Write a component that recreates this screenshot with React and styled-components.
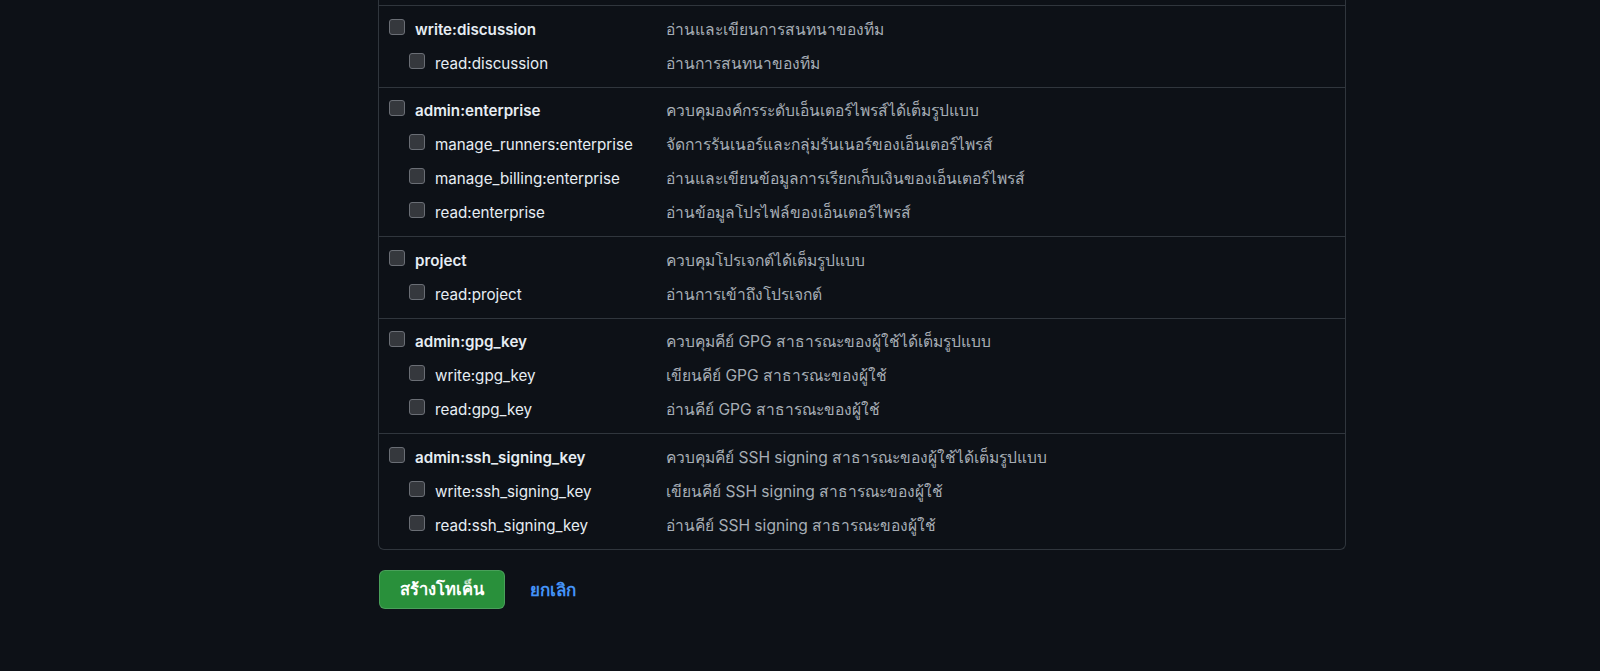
import React from "react";
import styled, { createGlobalStyle } from "styled-components";

const Global = createGlobalStyle`
  html, body { margin: 0; padding: 0; background: #0d1117; }
  body {
    font-family: Inter, "Liberation Sans", "Noto Sans", sans-serif;
    color: #e6edf3;
    -webkit-font-smoothing: antialiased;
  }
`;

const Page = styled.div`
  width: 1600px;
  height: 671px;
  overflow: hidden;
  background: #0d1117;
  padding-left: 378px;
  box-sizing: border-box;
`;

const Column = styled.div`
  width: 968px;
`;

const ScopeBox = styled.div`
  border: 1px solid #30363d;
  border-top: none;
  border-radius: 0 0 6px 6px;
  padding-top: 5px;
`;

const Group = styled.div`
  border-top: 1px solid #30363d;
  padding: 6px 10px 6.6px;
`;

const Row = styled.div`
  display: grid;
  grid-template-columns: 277px 1fr;
  align-items: center;
  height: 34px;
`;

const LabelCell = styled.label`
  display: flex;
  align-items: center;
  gap: 10px;
  padding-left: ${(p) => (p.$nested ? "20px" : "0")};
  font-size: 15.2px;
  font-weight: ${(p) => (p.$nested ? 400 : 600)};
  color: #e6edf3;
  white-space: nowrap;
`;

const Box = styled.span`
  display: inline-block;
  flex: none;
  width: 14px;
  height: 14px;
  border: 1px solid #6a6e75;
  background: #35383d;
  border-radius: 3px;
  margin-top: -5px;
`;

const Desc = styled.div`
  font-size: 15.6px;
  color: #a6adb5;
  white-space: nowrap;
`;

const Actions = styled.div`
  display: flex;
  align-items: center;
  gap: 25px;
  margin-top: 20px;
  margin-left: 1px;
`;

const PrimaryButton = styled.button`
  height: 39px;
  padding: 0 20px;
  background: #29903b;
  color: #ffffff;
  border: 1px solid rgba(240, 246, 252, 0.16);
  border-radius: 6px;
  font-family: inherit;
  font-size: 16.5px;
  font-weight: 700;
  cursor: pointer;
`;

const CancelLink = styled.a`
  color: #4493f8;
  font-size: 17px;
  font-weight: 600;
  text-decoration: none;
`;

const groups = [
  [
    ["write:discussion", "อ่านและเขียนการสนทนาของทีม"],
    ["read:discussion", "อ่านการสนทนาของทีม"],
  ],
  [
    ["admin:enterprise", "ควบคุมองค์กรระดับเอ็นเตอร์ไพรส์ได้เต็มรูปแบบ"],
    ["manage_runners:enterprise", "จัดการรันเนอร์และกลุ่มรันเนอร์ของเอ็นเตอร์ไพรส์"],
    ["manage_billing:enterprise", "อ่านและเขียนข้อมูลการเรียกเก็บเงินของเอ็นเตอร์ไพรส์"],
    ["read:enterprise", "อ่านข้อมูลโปรไฟล์ของเอ็นเตอร์ไพรส์"],
  ],
  [
    ["project", "ควบคุมโปรเจกต์ได้เต็มรูปแบบ"],
    ["read:project", "อ่านการเข้าถึงโปรเจกต์"],
  ],
  [
    ["admin:gpg_key", "ควบคุมคีย์ GPG สาธารณะของผู้ใช้ได้เต็มรูปแบบ"],
    ["write:gpg_key", "เขียนคีย์ GPG สาธารณะของผู้ใช้"],
    ["read:gpg_key", "อ่านคีย์ GPG สาธารณะของผู้ใช้"],
  ],
  [
    ["admin:ssh_signing_key", "ควบคุมคีย์ SSH signing สาธารณะของผู้ใช้ได้เต็มรูปแบบ"],
    ["write:ssh_signing_key", "เขียนคีย์ SSH signing สาธารณะของผู้ใช้"],
    ["read:ssh_signing_key", "อ่านคีย์ SSH signing สาธารณะของผู้ใช้"],
  ],
];

export default function App() {
  return (
    <>
      <Global />
      <Page>
        <Column>
          <ScopeBox>
            {groups.map((g, gi) => (
              <Group key={gi}>
                {g.map(([name, desc], i) => (
                  <Row key={name}>
                    <LabelCell $nested={i > 0}>
                      <Box />
                      {name}
                    </LabelCell>
                    <Desc>{desc}</Desc>
                  </Row>
                ))}
              </Group>
            ))}
          </ScopeBox>
          <Actions>
            <PrimaryButton>สร้างโทเค็น</PrimaryButton>
            <CancelLink href="#">ยกเลิก</CancelLink>
          </Actions>
        </Column>
      </Page>
    </>
  );
}
